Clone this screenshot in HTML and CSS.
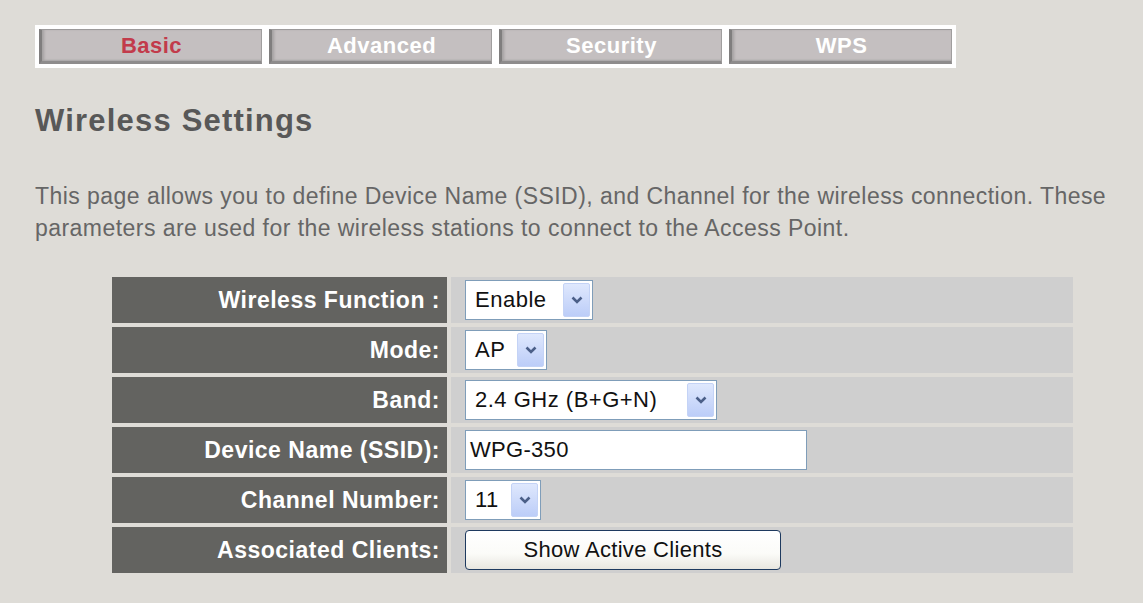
FILE: index.html
```html
<!DOCTYPE html>
<html>
<head>
<meta charset="utf-8">
<link rel="stylesheet" href="styles.css">
</head>
<body>
<div class="page">
  <div class="tabframe">
    <div class="tab active">Basic</div>
    <div class="tab">Advanced</div>
    <div class="tab">Security</div>
    <div class="tab">WPS</div>
  </div>

  <h1 class="title">Wireless Settings</h1>

  <p class="desc">This page allows you to define Device Name (SSID), and Channel for the wireless connection. These parameters are used for the wireless stations to connect to the Access Point.</p>

  <div class="settings">
    <div class="label">Wireless Function :</div>
    <div class="value">
      <div class="select w-enable"><span class="sel-text">Enable</span><span class="arrow"><svg width="12" height="8" viewBox="0 0 12 8"><path d="M1.5 1.5 L6 6 L10.5 1.5" fill="none" stroke="#4b5f88" stroke-width="2.6"/></svg></span></div>
    </div>

    <div class="label">Mode:</div>
    <div class="value">
      <div class="select w-mode"><span class="sel-text">AP</span><span class="arrow"><svg width="12" height="8" viewBox="0 0 12 8"><path d="M1.5 1.5 L6 6 L10.5 1.5" fill="none" stroke="#4b5f88" stroke-width="2.6"/></svg></span></div>
    </div>

    <div class="label">Band:</div>
    <div class="value">
      <div class="select w-band"><span class="sel-text">2.4 GHz (B+G+N)</span><span class="arrow"><svg width="12" height="8" viewBox="0 0 12 8"><path d="M1.5 1.5 L6 6 L10.5 1.5" fill="none" stroke="#4b5f88" stroke-width="2.6"/></svg></span></div>
    </div>

    <div class="label">Device Name (SSID):</div>
    <div class="value">
      <div class="textbox">WPG-350</div>
    </div>

    <div class="label">Channel Number:</div>
    <div class="value">
      <div class="select w-chan"><span class="sel-text">11</span><span class="arrow"><svg width="12" height="8" viewBox="0 0 12 8"><path d="M1.5 1.5 L6 6 L10.5 1.5" fill="none" stroke="#4b5f88" stroke-width="2.6"/></svg></span></div>
    </div>

    <div class="label">Associated Clients:</div>
    <div class="value">
      <div class="button">Show Active Clients</div>
    </div>
  </div>
</div>
</body>
</html>
```

FILE: styles.css
```css
html, body {
  margin: 0;
  padding: 0;
  background: #dedcd7;
}
body {
  font-family: "Liberation Sans", Arial, sans-serif;
  width: 1143px;
  height: 603px;
  overflow: hidden;
}
.page {
  padding: 25px 0 0 35px;
  border-left: 5px solid #e6e5e1;
  border-top: 3px solid #e6e5e1;
  margin-top: -3px;
  box-sizing: border-box;
  height: 606px;
  margin-left: -5px;
}
.tabframe {
  display: flex;
  gap: 7px;
  width: 913px;
  padding: 4px;
  background: #ffffff;
}
.tab {
  width: 223px;
  height: 35px;
  box-sizing: border-box;
  background: #c4bfc0;
  border-left: 3px solid #807e7e;
  border-top: 1px solid #9c9a9a;
  border-right: 1px solid #a09e9e;
  border-bottom: 3px solid #8e8c8c;
  box-shadow: inset 3px 0 3px -1px #a3a0a0, inset 0 -2px 2px -1px #a9a6a6;
  color: #ffffff;
  font-weight: bold;
  font-size: 22px;
  letter-spacing: 0.5px;
  text-align: center;
  line-height: 31px;
}
.tab.active {
  color: #c23b4b;
}
.title {
  margin: 36px 0 0 0;
  font-size: 31px;
  letter-spacing: 1.2px;
  font-weight: bold;
  color: #585858;
  line-height: 34px;
}
.desc {
  margin: 42px 0 0 0;
  width: 1090px;
  font-size: 23px;
  letter-spacing: 0.45px;
  line-height: 32px;
  color: #666666;
}
.settings {
  margin: 33px 0 0 77px;
  width: 961px;
  display: grid;
  grid-template-columns: 335px 1fr;
  grid-auto-rows: 46px;
  gap: 4px;
}
.label {
  background: #636360;
  color: #ffffff;
  font-weight: bold;
  font-size: 23px;
  letter-spacing: 0.5px;
  padding-right: 7px;
  display: flex;
  align-items: center;
  justify-content: flex-end;
}
.value {
  background: #cfcfcf;
  display: flex;
  align-items: center;
  padding-left: 14px;
}
.select {
  height: 40px;
  box-sizing: border-box;
  border: 1px solid #7f9db9;
  background: #ffffff;
  display: flex;
  align-items: center;
  justify-content: space-between;
  padding: 2px;
  font-size: 22px;
  letter-spacing: 0.5px;
  color: #111111;
}
.sel-text {
  padding-left: 7px;
}
.arrow {
  width: 27px;
  height: 34px;
  box-sizing: border-box;
  background: linear-gradient(#dfe8fd, #bccdf8);
  border: 1px solid #c4d3f6;
  border-radius: 2px;
  display: flex;
  align-items: center;
  justify-content: center;
}
.w-enable { width: 128px; }
.w-mode { width: 82px; }
.w-band { width: 252px; }
.w-chan { width: 76px; }
.textbox {
  width: 342px;
  height: 40px;
  box-sizing: border-box;
  border: 1px solid #7f9db9;
  background: #ffffff;
  font-size: 22px;
  letter-spacing: 0.3px;
  color: #111111;
  padding-left: 4px;
  display: flex;
  align-items: center;
}
.button {
  width: 316px;
  height: 40px;
  box-sizing: border-box;
  border: 1px solid #1e3a5f;
  border-radius: 4px;
  background: linear-gradient(#ffffff 0%, #fbfbf8 60%, #e8e6df 100%);
  font-size: 22px;
  letter-spacing: 0.3px;
  color: #111111;
  display: flex;
  align-items: center;
  justify-content: center;
}
```
